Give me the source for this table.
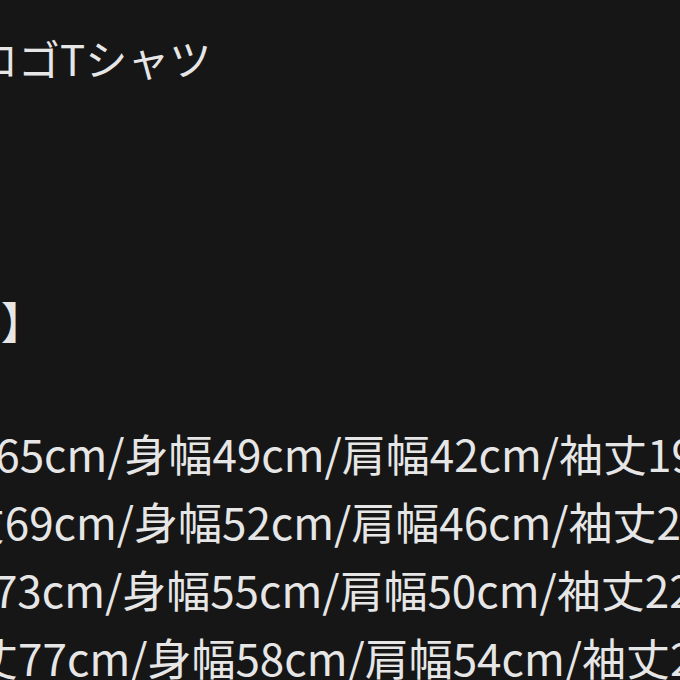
const sizes = [
  { label: "S", text: "着丈65cm/身幅49cm/肩幅42cm/袖丈19cm" },
  { label: "M", text: "着丈69cm/身幅52cm/肩幅46cm/袖丈20cm" },
  { label: "L", text: "着丈73cm/身幅55cm/肩幅50cm/袖丈22cm" },
  { label: "XL", text: "着丈77cm/身幅58cm/肩幅54cm/袖丈23cm" },
];

export default function App() {
  return (
    <div
      className="w-[680px] h-[680px] overflow-hidden bg-[#161616] text-[#e6e6e6] text-[44px] leading-[68px] whitespace-nowrap"
      style={{ fontFamily: '"Noto Sans CJK JP", "Noto Sans", sans-serif' }}
    >
      {/* タイトル */}
      <p className="ml-[-24px] mt-[24px] text-[42px]">ロゴTシャツ</p>

      {/* サイズ見出し */}
      <p className="ml-[-174px] mt-[194px]">【サイズ】</p>

      {/* サイズ表 */}
      <div className="ml-[-163px] mt-[65px]">
        {sizes.map((row) => (
          <p key={row.label}>
            {row.label}：{row.text}
          </p>
        ))}
      </div>
    </div>
  );
}
